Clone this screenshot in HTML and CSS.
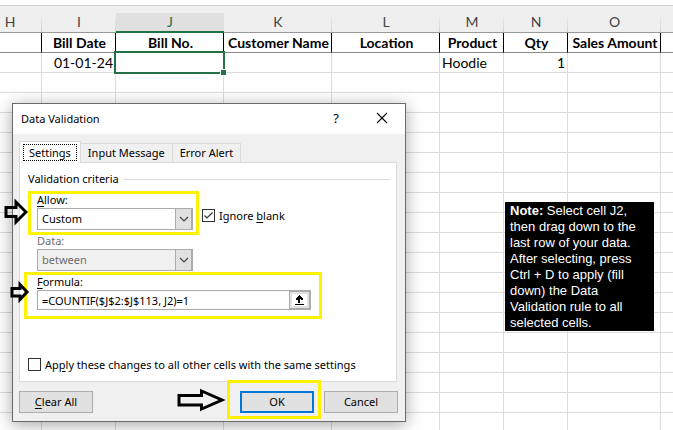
FILE: index.html
```html
<!DOCTYPE html>
<html lang="en">
<head>
<meta charset="utf-8">
<title>Data Validation</title>
<link rel="stylesheet" href="styles.css">
</head>
<body>
<main class="workbook">
  <table class="sheet">
    <colgroup>
      <col class="col-h"><col class="col-date"><col class="col-wide"><col class="col-wide"><col class="col-wide"><col class="col-narrow"><col class="col-narrow"><col class="col-amount"><col>
    </colgroup>
    <thead>
      <tr class="letters"><th class="letter-h">H</th><th>I</th><th class="current">J</th><th>K</th><th>L</th><th>M</th><th>N</th><th>O</th><th></th></tr>
      <tr class="titles"><th></th><th>Bill Date</th><th>Bill No.</th><th>Customer Name</th><th>Location</th><th>Product</th><th>Qty</th><th>Sales Amount</th><th></th></tr>
    </thead>
    <tbody>
      <tr><td></td><td class="num">01-01-24</td><td class="selected"><span class="selection"></span></td><td></td><td></td><td>Hoodie</td><td class="num">1</td><td></td><td></td></tr>
      <tr><td></td><td></td><td></td><td></td><td></td><td></td><td></td><td></td><td></td></tr>
      <tr><td></td><td></td><td></td><td></td><td></td><td></td><td></td><td></td><td></td></tr>
      <tr><td></td><td></td><td></td><td></td><td></td><td></td><td></td><td></td><td></td></tr>
      <tr><td></td><td></td><td></td><td></td><td></td><td></td><td></td><td></td><td></td></tr>
      <tr><td></td><td></td><td></td><td></td><td></td><td></td><td></td><td></td><td></td></tr>
      <tr><td></td><td></td><td></td><td></td><td></td><td></td><td></td><td></td><td></td></tr>
      <tr><td></td><td></td><td></td><td></td><td></td><td></td><td></td><td></td><td></td></tr>
      <tr><td></td><td></td><td></td><td></td><td></td><td></td><td></td><td></td><td></td></tr>
      <tr><td></td><td></td><td></td><td></td><td></td><td></td><td></td><td></td><td></td></tr>
      <tr><td></td><td></td><td></td><td></td><td></td><td></td><td></td><td></td><td></td></tr>
      <tr><td></td><td></td><td></td><td></td><td></td><td></td><td></td><td></td><td></td></tr>
      <tr><td></td><td></td><td></td><td></td><td></td><td></td><td></td><td></td><td></td></tr>
      <tr><td></td><td></td><td></td><td></td><td></td><td></td><td></td><td></td><td></td></tr>
      <tr><td></td><td></td><td></td><td></td><td></td><td></td><td></td><td></td><td></td></tr>
      <tr><td></td><td></td><td></td><td></td><td></td><td></td><td></td><td></td><td></td></tr>
      <tr><td></td><td></td><td></td><td></td><td></td><td></td><td></td><td></td><td></td></tr>
      <tr><td></td><td></td><td></td><td></td><td></td><td></td><td></td><td></td><td></td></tr>
      <tr><td></td><td></td><td></td><td></td><td></td><td></td><td></td><td></td><td></td></tr>
    </tbody>
  </table>

  <section class="dialog" role="dialog" aria-labelledby="dialog-title">
    <header class="titlebar">
      <h1 id="dialog-title">Data Validation</h1>
      <button class="title-button" type="button">?</button>
      <button class="title-button" type="button" aria-label="Close">
        <svg width="12" height="12" viewBox="0 0 12 12"><path d="M1 1L11 11M11 1L1 11" stroke="#000" stroke-width="1.1" fill="none"/></svg>
      </button>
    </header>
    <div class="tabs" role="tablist">
      <button class="tab active" role="tab" aria-selected="true" type="button"><span class="focus">Settings</span></button>
      <button class="tab" role="tab" type="button">Input Message</button>
      <button class="tab" role="tab" type="button">Error Alert</button>
    </div>
    <div class="panel" role="tabpanel">
      <h2 class="group-title">Validation criteria</h2>
      <div class="row">
        <div class="field highlight allow">
          <label for="allow"><u>A</u>llow:</label>
          <div class="combo">
            <select id="allow"><option>Custom</option></select>
            <span class="drop"><svg width="10" height="6" viewBox="0 0 10 6"><path d="M1 1L5 5L9 1" stroke="#444" stroke-width="1.2" fill="none"/></svg></span>
          </div>
        </div>
        <label class="check"><input type="checkbox" checked><svg class="tick" width="13" height="13" viewBox="0 0 13 13"><path d="M2.5 6.5L5 9L10.5 3.5" stroke="#333" stroke-width="1.2" fill="none"/></svg><span>Ignore <u>b</u>lank</span></label>
      </div>
      <div class="field data">
        <label for="data">Data:</label>
        <div class="combo">
          <select id="data" disabled><option>between</option></select>
          <span class="drop"><svg width="10" height="6" viewBox="0 0 10 6"><path d="M1 1L5 5L9 1" stroke="#444" stroke-width="1.2" fill="none"/></svg></span>
        </div>
      </div>
      <div class="field highlight formula">
        <label for="formula"><u>F</u>ormula:</label>
        <div class="range">
          <input id="formula" type="text" value="=COUNTIF($J$2:$J$113, J2)=1">
          <button class="picker" type="button" aria-label="Collapse dialog">
            <svg width="9" height="11" viewBox="0 0 9 11" shape-rendering="crispEdges"><path d="M4 0h1v1h1v1h1v1h1v2H6V4h-1v4H4 3V4H3v1H1V3h1V2h1V1h1zM0 9h9v1H0z"/></svg>
          </button>
        </div>
      </div>
      <label class="check apply"><input type="checkbox"><span>Ap<u>p</u>ly these changes to all other cells with the same settings</span></label>
    </div>
    <footer class="actions">
      <button class="button clear" type="button"><u>C</u>lear All</button>
      <span class="ok-wrap"><button class="button ok" type="button">OK</button></span>
      <button class="button" type="button">Cancel</button>
    </footer>
  </section>

  <svg class="arrow arrow-allow" width="26" height="28" viewBox="0 0 26 28"><path d="M4 9.500H14V4L24 14L14 24V18.500H4Z"/></svg>
  <svg class="arrow arrow-formula" width="22" height="22" viewBox="0 0 22 22"><path d="M4 7.500H12V3.500L19 11L12 18.500V15H4Z"/></svg>
  <svg class="arrow arrow-ok" width="52" height="26" viewBox="0 0 52 26"><path d="M4 8.500H26.500V4L47 13L26.500 22V18H4Z"/></svg>

  <aside class="note"><strong>Note:</strong> Select cell J2, then drag down to the last row of your data. After selecting, press Ctrl + D to apply (fill down) the Data Validation rule to all selected cells.</aside>
</main>
</body>
</html>
```
FILE: styles.css
```css
* { box-sizing: border-box; }

body {
  margin: 0;
  background: #fff;
  color: #000;
  font-family: "Noto Sans", "Open Sans", sans-serif;
  font-size: 11px;
}

button, input, select { font: inherit; color: inherit; margin: 0; }
h1, h2 { margin: 0; font-size: inherit; font-weight: normal; }
u { text-underline-offset: 2px; }

.workbook {
  position: relative;
  height: 100vh;
  overflow: hidden;
  padding-top: 5px;
}

/* Sheet */
.sheet {
  width: 100%;
  table-layout: fixed;
  border-collapse: separate;
  border-spacing: 0;
  border-top: 1px solid #d0d0d0;
  font-family: Lato, "Open Sans", sans-serif;
  font-size: 14px;
  line-height: 18px;
}
.col-h { width: 42px; }
.col-date { width: 74px; }
.col-wide { width: 108px; }
.col-narrow { width: 64px; }
.col-amount { width: 93px; }

.sheet th, .sheet td {
  height: 20px;
  padding: 1px 2px 0;
  border-right: 1px solid #dcdcdc;
  border-bottom: 1px solid #dcdcdc;
  white-space: nowrap;
}
.sheet .num { text-align: right; }
.sheet .letters th {
  height: 27px;
  padding-top: 6px;
  border-right: 0;
  background: linear-gradient(#efefef 8px, #cfcfcf 26px) right / 1px 100% no-repeat #efefef;
  border-bottom-color: #999;
  color: #444;
  font-weight: normal;
}
.sheet .letters .letter-h { padding-right: 24px; }
.sheet .letters .current {
  background: linear-gradient(#efefef 7px, #e0e0e0 7px);
  border-bottom: 2px solid #217346;
  color: #217346;
}
.sheet .titles th {
  padding-left: 3px;
  padding-right: 1px;
  border-right-color: #000;
  border-bottom-color: #8c8c8c;
  font-weight: bold;
}
.sheet tr > :last-child,
.sheet .letters th:last-child { border-right: 0; background-image: none; }

.selected { position: relative; }
.selection {
  position: absolute;
  inset: -2px;
  border: 2px solid #217346;
}
.selection::after {
  content: "";
  position: absolute;
  right: -3px;
  bottom: -3px;
  width: 5px;
  height: 5px;
  background: #217346;
  outline: 1px solid #fff;
}

/* Dialog */
.dialog {
  position: absolute;
  left: 12px;
  top: 103px;
  width: 394px;
  background: #f0f0f0;
  border: 1px solid #6a6a6a;
  box-shadow: 0 3px 16px rgba(0, 0, 0, 0.35);
}
.titlebar {
  display: flex;
  align-items: center;
  height: 30px;
  padding-left: 8px;
  background: #fff;
}
.titlebar h1 { flex: 1; padding-bottom: 2px; }
.title-button {
  display: flex;
  align-items: center;
  justify-content: center;
  width: 46px;
  height: 30px;
  padding: 0 0 2px;
  border: 0;
  background: none;
  font-size: 13px;
}

.tabs {
  display: flex;
  align-items: flex-end;
  height: 28px;
  margin-left: 6px;
}
.tab {
  height: 19px;
  padding: 0 7px;
  border: 1px solid #d9d9d9;
  border-left: 0;
  border-bottom: 0;
  background: #f0f0f0;
  line-height: 18px;
}
.tab.active {
  position: relative;
  height: 22px;
  padding: 0 3px;
  border-left: 1px solid #d9d9d9;
  background: #fff;
  margin-bottom: -1px;
}
.focus {
  display: block;
  padding: 0 5px;
  border: 1px dotted #000;
  line-height: 15px;
}

.panel {
  margin: 0 8px 0 6px;
  padding: 8px 6px 10px 8px;
  border: 1px solid #d9d9d9;
  background: #fff;
}
.group-title {
  display: flex;
  align-items: center;
  gap: 5px;
  margin-bottom: 4px;
  line-height: 16px;
}
.group-title::after {
  content: "";
  flex: 1;
  border-top: 1px solid #d9d9d9;
}
.row { display: flex; gap: 3px; }
.field > label { display: block; height: 14px; line-height: 12px; }
.highlight { border: 3px solid #fff200; }
.allow { padding: 0 3px 2px 6px; }
.data { padding-left: 9px; color: #6d6d6d; }
.formula {
  width: 298px;
  margin: 1px 0 39px -4px;
  padding: 1px 8px 6px 10px;
}

.combo { position: relative; width: 156px; height: 22px; }
.combo select {
  appearance: none;
  display: block;
  width: 100%;
  height: 22px;
  padding: 0 20px 2px 4px;
  border: 1px solid #ababab;
  border-radius: 0;
  background: #fff;
  opacity: 1;
}
.combo select:disabled { background: #f0f0f0; color: #6d6d6d; }
.drop {
  position: absolute;
  top: 0;
  right: 0;
  display: flex;
  align-items: center;
  justify-content: center;
  width: 18px;
  height: 22px;
  border: 1px solid #ababab;
  border-right-width: 2px;
  background: #e1e1e1;
  pointer-events: none;
}
.range { display: flex; }
.range input {
  flex: 1;
  min-width: 0;
  height: 20px;
  padding: 0 4px;
  border: 1px solid #ababab;
  border-right: 0;
  background: #fff;
}
.picker {
  display: flex;
  align-items: center;
  justify-content: center;
  width: 22px;
  height: 20px;
  padding: 0;
  border: 2px solid #ababab;
  border-left-width: 1px;
  background: #fff;
  box-shadow: inset 0 0 0 2px #e1e1e1;
}

.check {
  position: relative;
  display: flex;
  align-items: center;
  gap: 4px;
  line-height: 13px;
}
.row .check { padding-top: 5px; }
.check input {
  appearance: none;
  width: 13px;
  height: 13px;
  border: 1px solid #333;
  background: #fff;
}
.tick { position: absolute; left: 0; }

.actions {
  display: flex;
  gap: 10px;
  padding: 9px 7px 8px 6px;
}
.button {
  width: 74px;
  height: 22px;
  padding: 0 0 2px;
  border: 1px solid #adadad;
  background: #e1e1e1;
}
.clear { margin-right: auto; }
.ok { border: 2px solid #0078d7; }
.ok-wrap { position: relative; display: flex; }
.ok-wrap::after {
  content: "";
  position: absolute;
  inset: -11px -7px -6px -13px;
  border: 3px solid #fff200;
  pointer-events: none;
}

/* Callouts */
.arrow {
  position: absolute;
  fill: none;
  stroke: #000;
  stroke-width: 3;
}
.arrow-allow { left: 2px; top: 198px; }
.arrow-formula { left: 8px; top: 281px; }
.arrow-ok { left: 175px; top: 387px; }

.note {
  position: absolute;
  left: 505px;
  top: 202px;
  width: 149px;
  padding: 1px 5px 0;
  background: #000;
  color: #fff;
  font-family: "Liberation Sans", Arial, sans-serif;
  font-size: 13px;
  line-height: 16px;
}
```
